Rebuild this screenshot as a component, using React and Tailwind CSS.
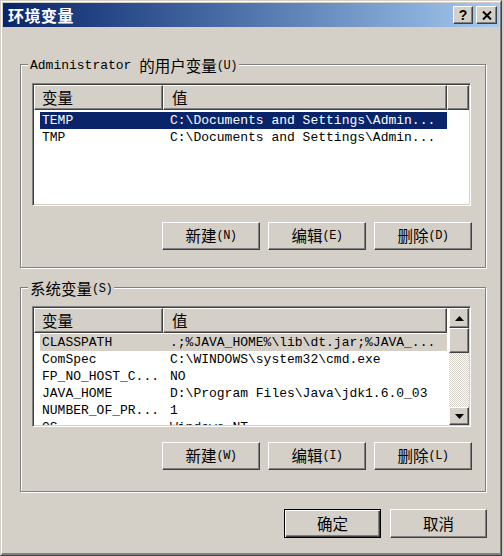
import React from 'react';

const mono = "font-['Liberation_Mono','DejaVu_Sans_Mono',monospace]";
const cjk = "font-['Noto_Sans_CJK_SC','Liberation_Sans',sans-serif]";

const raised =
  'border border-t-white border-l-white border-r-[#404040] border-b-[#404040] shadow-[inset_-1px_-1px_0_#808080] bg-[#d4d0c8]';
const sunken =
  'border border-t-[#808080] border-l-[#808080] border-r-white border-b-white shadow-[inset_1px_1px_0_#404040,inset_-1px_-1px_0_#d4d0c8]';

const userVars = [
  { name: 'TEMP', value: 'C:\\Documents and Settings\\Admin...', sel: 'active' },
  { name: 'TMP', value: 'C:\\Documents and Settings\\Admin...' },
];

const sysVars = [
  { name: 'CLASSPATH', value: '.;%JAVA_HOME%\\lib\\dt.jar;%JAVA_...', sel: 'inactive' },
  { name: 'ComSpec', value: 'C:\\WINDOWS\\system32\\cmd.exe' },
  { name: 'FP_NO_HOST_C...', value: 'NO' },
  { name: 'JAVA_HOME', value: 'D:\\Program Files\\Java\\jdk1.6.0_03' },
  { name: 'NUMBER_OF_PR...', value: '1' },
  { name: 'OS', value: 'Windows_NT' },
];

const Label = ({ zh, key1, pre }) => (
  <span className="flex items-center whitespace-pre">
    {pre && <span className={`${mono} text-[13px]`}>{pre}</span>}
    <span className={`${cjk} text-[15.5px]`}>{zh}</span>
    {key1 && <span className={`${mono} text-[12px] tracking-[-0.5px]`}>({key1})</span>}
  </span>
);

const Button = ({ zh, k }) => (
  <button className={`${raised} w-[98px] h-[28px] flex items-center justify-center text-black`}>
    <Label zh={zh} key1={k} />
  </button>
);

const Header = ({ filler }) => (
  <div className="flex h-[25px] shrink-0">
    <div className={`${raised} w-[129px] h-full pl-[7px] flex items-center`}>
      <span className={`${cjk} text-[15.5px]`}>变量</span>
    </div>
    <div className={`${raised} w-[284px] h-full pl-[8px] flex items-center`}>
      <span className={`${cjk} text-[15.5px]`}>值</span>
    </div>
    {filler && <div className={`${raised} flex-1 h-full`} />}
  </div>
);

const Row = ({ name, value, sel }) => {
  const cls =
    sel === 'active'
      ? 'bg-[#0a246a] text-white'
      : sel === 'inactive'
      ? 'bg-[#d4d0c8] text-black'
      : 'text-black';
  return (
    <div className="flex h-[17px] shrink-0">
      <div className={`ml-[6px] w-[407px] flex items-center ${cls} ${mono} text-[13px] whitespace-pre`}>
        <span className="w-[130px] pl-[2px]">{name}</span>
        <span>{value}</span>
      </div>
    </div>
  );
};

const Arrow = ({ up }) => (
  <svg width="9" height="5" viewBox="0 0 9 5">
    <polygon points={up ? '4.5,0 9,5 0,5' : '0,0 9,0 4.5,5'} fill="#000" />
  </svg>
);

const GroupBox = ({ label, height, children }) => (
  <div
    className={`relative ml-[17px] w-[466px] ${height} border border-[#808080] shadow-[inset_1px_1px_0_#fff,1px_1px_0_#fff]`}
  >
    <div className="absolute left-[7px] -top-[8px] bg-[#d4d0c8] px-[2px] h-[18px] flex items-center text-black">
      {label}
    </div>
    {children}
  </div>
);

export default function App() {
  return (
    <div className="w-[504px] h-[556px] bg-[#d4d0c8] overflow-hidden">
      <div className="w-[502px] h-[556px] border border-t-[#d4d0c8] border-l-[#d4d0c8] border-r-[#404040] border-b-[#404040]">
        <div className="h-full border border-t-white border-l-white border-r-[#808080] border-b-[#808080] border-b-2 p-[1px] flex flex-col">
          {/* title bar */}
          <div className="h-[24px] shrink-0 flex items-center bg-gradient-to-r from-[#0a246a] to-[#a6caf0] pl-[5px] pr-[2px]">
            <span className={`${cjk} text-white font-bold text-[16px] tracking-[0.5px]`}>环境变量</span>
            <div className="ml-auto flex gap-[3px]">
              <div className={`${raised} w-[20px] h-[18px] flex items-center justify-center`}>
                <span className="font-['Liberation_Sans',sans-serif] font-bold text-[14px] leading-none text-black">?</span>
              </div>
              <div className={`${raised} w-[21px] h-[18px] flex items-center justify-center`}>
                <svg width="10" height="9" viewBox="0 0 10 9">
                  <path d="M1 0.5 L9 8.5 M9 0.5 L1 8.5" stroke="#000" strokeWidth="2" />
                </svg>
              </div>
            </div>
          </div>

          <div className="h-[37px] shrink-0" />

          <GroupBox label={<Label pre="Administrator " zh="的用户变量" key1="U" />} height="h-[204px]">
            <div className="pt-[18px] pl-[11px]">
              <div className={`${sunken} w-[439px] h-[123px] bg-white p-[1px] flex flex-col overflow-hidden`}>
                <Header filler />
                <div className="h-[2px] shrink-0" />
                {userVars.map((v) => (
                  <Row key={v.name} {...v} />
                ))}
              </div>
            </div>
            <div className="mt-[16px] flex justify-end gap-[8px] pr-[13px]">
              <Button zh="新建" k="N" />
              <Button zh="编辑" k="E" />
              <Button zh="删除" k="D" />
            </div>
          </GroupBox>

          <div className="h-[19px] shrink-0" />

          <GroupBox label={<Label zh="系统变量" key1="S" />} height="h-[205px]">
            <div className="pt-[18px] pl-[11px]">
              <div className={`${sunken} w-[439px] h-[121px] bg-white p-[1px] flex overflow-hidden`}>
                <div className="flex-1 flex flex-col overflow-hidden">
                  <Header />
                  <div className="h-[1px] shrink-0" />
                  {sysVars.map((v) => (
                    <Row key={v.name} {...v} />
                  ))}
                </div>
                <div className="w-[20px] h-full flex flex-col shrink-0">
                  <div className={`${raised} h-[20px] shrink-0 flex items-center justify-center`}>
                    <Arrow up />
                  </div>
                  <div className={`${raised} h-[25px] shrink-0`} />
                  <div className="flex-1 bg-[image:repeating-conic-gradient(#ffffff_0_25%,#d4d0c8_0_50%)] bg-[length:2px_2px]" />
                  <div className={`${raised} h-[18px] shrink-0 flex items-center justify-center`}>
                    <Arrow />
                  </div>
                </div>
              </div>
            </div>
            <div className="mt-[15px] flex justify-end gap-[8px] pr-[13px]">
              <Button zh="新建" k="W" />
              <Button zh="编辑" k="I" />
              <Button zh="删除" k="L" />
            </div>
          </GroupBox>

          <div className="mt-[17px] flex justify-end gap-[9px] pr-[12px]">
            <button className="w-[97px] h-[29px] border border-black bg-[#d4d0c8] shadow-[inset_1px_1px_0_#fff,inset_-1px_-1px_0_#404040,inset_-2px_-2px_0_#808080] flex items-center justify-center">
              <span className={`${cjk} text-[15.5px] text-black`}>确定</span>
            </button>
            <button className={`${raised} w-[97px] h-[29px] flex items-center justify-center`}>
              <span className={`${cjk} text-[15.5px] text-black`}>取消</span>
            </button>
          </div>
        </div>
      </div>
    </div>
  );
}
